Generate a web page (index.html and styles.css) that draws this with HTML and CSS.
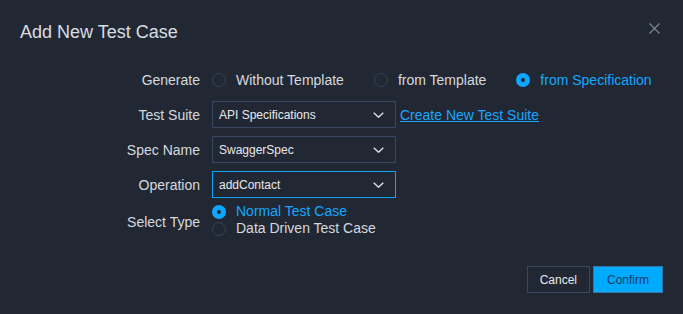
FILE: index.html
```html
<!DOCTYPE html>
<html>
<head>
  <meta charset="utf8">
  <title>Add New Test Case</title>
  <link rel="stylesheet" href="styles.css">
</head>
<body>

<div class="dialog">
  <div class="dialog-head">
    <span class="dialog-title">Add New Test Case</span>
    <svg class="dialog-close" width="11" height="11" viewBox="0 0 11 11"><path d="M0.5 0.5L10.5 10.5M10.5 0.5L0.5 10.5" stroke="#7d8591" stroke-width="1.2" fill="none"/></svg>
  </div>

  <div class="form">
    <label class="form-label">Generate</label>
    <div class="form-value radios">
      <span class="radio"><i class="radio-dot"></i>Without Template</span>
      <span class="radio"><i class="radio-dot"></i>from Template</span>
      <span class="radio checked"><i class="radio-dot"></i>from Specification</span>
    </div>

    <label class="form-label">Test Suite</label>
    <div class="form-value">
      <div class="select"><span>API Specifications</span><svg class="chevron" width="11" height="6" viewBox="0 0 11 6"><path d="M0.7 0.7L5.5 5.2L10.3 0.7" stroke="#dfe2e6" stroke-width="1.4" fill="none"/></svg></div>
      <a class="link" href="#">Create New Test Suite</a>
    </div>

    <label class="form-label">Spec Name</label>
    <div class="form-value">
      <div class="select"><span>SwaggerSpec</span><svg class="chevron" width="11" height="6" viewBox="0 0 11 6"><path d="M0.7 0.7L5.5 5.2L10.3 0.7" stroke="#dfe2e6" stroke-width="1.4" fill="none"/></svg></div>
    </div>

    <label class="form-label">Operation</label>
    <div class="form-value">
      <div class="select focus"><span>addContact</span><svg class="chevron" width="11" height="6" viewBox="0 0 11 6"><path d="M0.7 0.7L5.5 5.2L10.3 0.7" stroke="#dfe2e6" stroke-width="1.4" fill="none"/></svg></div>
    </div>

    <label class="form-label">Select Type</label>
    <div class="form-value radios-col">
      <span class="radio checked"><i class="radio-dot"></i>Normal Test Case</span>
      <span class="radio"><i class="radio-dot"></i>Data Driven Test Case</span>
    </div>
  </div>

  <div class="dialog-foot">
    <button class="btn">Cancel</button>
    <button class="btn btn-primary">Confirm</button>
  </div>
</div>

</body>
</html>
```
FILE: styles.css
```css
html, body { margin: 0; padding: 0; background: #222833; }
body { font-family: "Liberation Sans", Arial, sans-serif; font-size: 14px; color: #d5d9df; }
.dialog { width: 683px; height: 314px; box-sizing: border-box; }
.dialog-head { display: flex; justify-content: space-between; align-items: center; height: 64px; padding: 0 23px 0 20px; box-sizing: border-box; }
.dialog-title { font-size: 18px; color: #d9dde2; }
.dialog-close { margin-top: -8px; }

.form { display: grid; grid-template-columns: 200px auto; column-gap: 12px; row-gap: 8px; align-items: center; margin-top: 3px; }
.form-label { text-align: right; }
.form-value { display: flex; align-items: center; }
.radios { height: 26px; }
.radios .radio { margin-right: 30px; }
.radios-col { flex-direction: column; align-items: flex-start; margin-top: -3px; }
.radios-col .radio { line-height: 17px; }

.radio { display: inline-flex; align-items: center; white-space: nowrap; }
.radio-dot { display: inline-block; width: 12px; height: 12px; border: 1px solid #364256; border-radius: 50%; margin-right: 10px; box-sizing: content-box; }
.radio.checked { color: #13a7ff; }
.radio.checked .radio-dot { width: 4px; height: 4px; border: 5px solid #0ea6ff; background: #1e2430; }

.select { display: flex; justify-content: space-between; align-items: center; width: 184px; height: 27px; box-sizing: border-box; border: 1px solid #374766; padding: 0 11px 0 6px; font-size: 12px; color: #e6e9ec; }
.select.focus { border-color: #12a5f4; }
.chevron { display: block; }
.link { color: #1aa6ff; margin-left: 4px; }

.dialog-foot { display: flex; justify-content: flex-end; gap: 3px; padding: 29px 20px 0 0; }
.btn { height: 27px; box-sizing: border-box; padding: 0 12px; border: 1px solid #3a4660; background: transparent; color: #e6e8ec; font-family: "Liberation Sans", Arial, sans-serif; font-size: 12px; }
.btn-primary { background: #00aaff; border-color: #3574a6; color: #163a5c; padding: 0 13px; }
```
